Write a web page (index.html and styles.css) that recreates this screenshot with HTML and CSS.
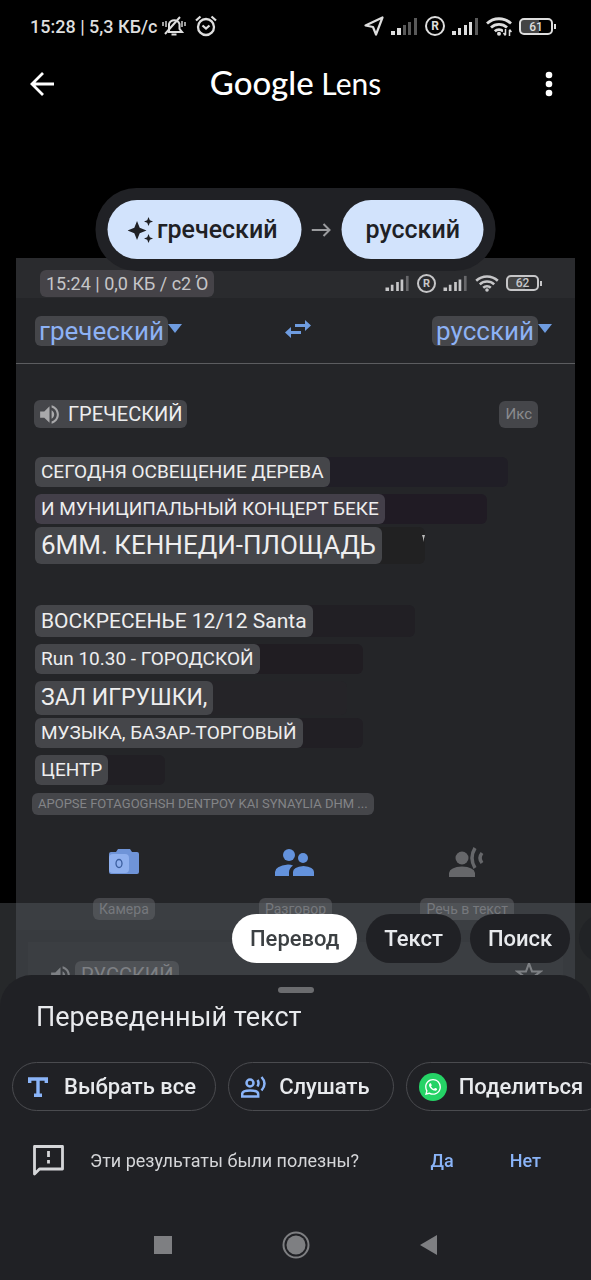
FILE: index.html
```html
<!DOCTYPE html>
<html lang="ru">
<head>
  <meta charset="UTF-8" />
  <meta name="viewport" content="width=device-width, initial-scale=1.0" />
  <title>Google Lens</title>
  <link rel="stylesheet" href="styles.css">
</head>
<body>
  <svg class="sprite" aria-hidden="true">
    <symbol id="wifi" viewBox="0 0 26 20">
      <g fill="none" stroke="currentColor" stroke-width="2.8">
        <path d="M1 7.5a17.5 17.5 0 0 1 24 0" />
        <path d="M5 11.5a11.8 11.8 0 0 1 16 0" />
        <path d="M8.8 15.3a6.3 6.3 0 0 1 8.4 0" />
      </g>
      <circle cx="13" cy="17.8" r="2" fill="currentColor" />
    </symbol>
    <symbol id="volume" viewBox="0 0 24 24">
      <path fill="currentColor" d="M3 9v6h4l5 5V4L7 9H3zm13.5 3c0-1.77-1.02-3.29-2.5-4.03v8.05c1.48-.73 2.5-2.25 2.5-4.02zM14 3.23v2.06c2.89.86 5 3.54 5 6.71s-2.11 5.85-5 6.71v2.06c4.01-.91 7-4.49 7-8.77s-2.99-7.86-7-8.77z" />
    </symbol>
  </svg>

  <header>
    <div class="status">
      <span class="status-text">15:28 | 5,3 КБ/с</span>
      <svg class="bell" viewBox="0 0 24 22" fill="none" stroke="currentColor" stroke-width="2">
        <path d="M7 16V9a5.5 5.5 0 0 1 10.500 0v5l2.500 3H6M3 19L18 2" />
        <path d="M4 6v6M1 7v4M20 6v6M23 7v4" stroke-width="1.400" />
        <path d="M9.500 19.500h5" stroke-width="2" />
      </svg>
      <svg class="alarm" viewBox="0 0 22 22" fill="none" stroke="currentColor" stroke-width="2.300">
        <circle cx="11" cy="12" r="8" />
        <path d="M7.500 10.500l3.500 3 3.500-3M1 5.500l4.500-4M21 5.500l-4.500-4" />
      </svg>
      <div class="status-icons">
        <svg width="20" height="20" viewBox="0 0 20 20" fill="none" stroke="currentColor" stroke-width="2.200" stroke-linejoin="round"><path d="M18.500 1.500L12 18.500 9 11 1.500 9.500z" /></svg>
        <svg width="27" height="18" viewBox="0 0 27 18" fill="currentColor">
          <path d="M0 14h4v4H0zM6 11h4v7H6z" />
          <path opacity=".4" d="M12 8h3v10h-3zM17 5h3v13h-3zM23 1h3v17h-3z" />
        </svg>
        <span class="reg">R</span>
        <svg width="27" height="18" viewBox="0 0 27 18" fill="currentColor">
          <path d="M0 14h4v4H0zM6 11h3v7H6zM12 8h3v10h-3zM17 5h3v13h-3z" />
          <path opacity=".4" d="M23 1h3v17h-3z" />
        </svg>
        <svg width="26" height="20" viewBox="0 0 26 20">
          <use href="#wifi" />
          <path d="M17 13h9v7h-9z" fill="#000" />
          <path d="M19.500 13v6M17.500 17l2 2.500M23.500 20v-6M25.500 16l-2-2.500" fill="none" stroke="currentColor" stroke-width="1.500" />
        </svg>
        <span class="battery">61</span>
      </div>
    </div>

    <div class="appbar">
      <button class="icon-btn" aria-label="Назад">
        <svg width="24" height="24" viewBox="0 0 24 24" fill="none" stroke="currentColor" stroke-width="2.800"><path d="M24 12H2M13 1L2 12l11 11" /></svg>
      </button>
      <h1><span>Google</span> Lens</h1>
      <button class="icon-btn" aria-label="Меню">
        <svg width="24" height="26" viewBox="0 0 24 26" fill="currentColor"><circle cx="12" cy="4" r="3.300" /><circle cx="12" cy="13" r="3.300" /><circle cx="12" cy="22" r="3.300" /></svg>
      </button>
    </div>
  </header>

  <div class="languages">
    <button class="lang">
      <svg width="26" height="26" viewBox="0 0 26 26" fill="currentColor"><path d="M9.500 4l2.700 6.800L19 13.500l-6.800 2.700L9.500 23l-2.700-6.800L0 13.500l6.800-2.700zM21 0l1.300 3.200 3.200 1.300-3.200 1.300L21 9l-1.300-3.200-3.200-1.300 3.200-1.300zM21 17l1.300 3.200 3.200 1.300-3.200 1.300L21 26l-1.300-3.200-3.200-1.300 3.200-1.300z" /></svg>
      греческий
    </button>
    <svg class="to" width="20" height="16" viewBox="0 0 20 16" fill="none" stroke="currentColor" stroke-width="2"><path d="M0 8h18M12 2l6 6-6 6" /></svg>
    <button class="lang">русский</button>
  </div>

  <main class="photo">
    <div class="photo-status">
      <span class="tag tag-time">15:24 | 0,0 КБ / с2 Ό</span>
      <div class="status-icons">
        <svg width="25" height="16" viewBox="0 0 27 18" fill="currentColor">
          <path d="M0 14h4v4H0zM6 11h3v7H6zM12 8h3v10h-3zM17 5h3v13h-3z" />
          <path opacity=".4" d="M23 1h3v17h-3z" />
        </svg>
        <span class="reg">R</span>
        <svg width="25" height="16" viewBox="0 0 27 18" fill="currentColor">
          <path d="M0 14h4v4H0zM6 11h3v7H6zM12 8h3v10h-3zM17 5h3v13h-3z" />
          <path opacity=".4" d="M23 1h3v17h-3z" />
        </svg>
        <svg width="24" height="18"><use href="#wifi" /></svg>
        <span class="battery">62</span>
      </div>
    </div>

    <div class="photo-langs">
      <div class="pick"><span class="tag">греческий</span></div>
      <svg class="swap" width="26" height="18" viewBox="0 0 26 18" fill="#6e9ce0"><path d="M10 4h10V0l6 5.500-6 5.500V7H10zM16 11H6V7l-6 5.500L6 18v-4h10z" /></svg>
      <div class="pick"><span class="tag">русский</span></div>
    </div>

    <div class="source-head">
      <span class="tag tag-source"><svg width="25" height="25"><use href="#volume" /></svg>ГРЕЧЕСКИЙ</span>
      <span class="tag tag-x">Икс</span>
    </div>

    <div class="lines">
      <p class="line l1"><span class="tag">СЕГОДНЯ ОСВЕЩЕНИЕ ДЕРЕВА</span></p>
      <p class="line l2"><span class="tag">И МУНИЦИПАЛЬНЫЙ КОНЦЕРТ БЕКЕ</span></p>
      <p class="line l3 big"><span class="tag">6ММ. КЕННЕДИ-ПЛОЩАДЬ</span><svg class="speck" width="4" height="8" viewBox="0 0 4 8"><path d="M1 0h3L2 7V3z" fill="#bbb" /></svg></p>
    </div>
    <div class="lines second">
      <p class="line l4"><span class="tag">ВОСКРЕСЕНЬЕ 12/12 Santa</span></p>
      <p class="line l5"><span class="tag">Run 10.30 - ГОРОДСКОЙ</span></p>
      <p class="line l6 mid"><span class="tag">ЗАЛ ИГРУШКИ,</span></p>
      <p class="line l7"><span class="tag">МУЗЫКА, БАЗАР-ТОРГОВЫЙ</span></p>
      <p class="line l8"><span class="tag">ЦЕНТР</span></p>
    </div>
    <p class="translit"><span class="tag">APOPSE FOTAGOGHSH DENTPOY KAI SYNAYLIA DHM ...</span></p>

    <div class="actions">
      <div class="action">
        <svg width="30" height="32" viewBox="0 0 30 32">
          <path fill="#6f94d8" d="M9 3h12l2 3h5q2 0 2 2v18q0 2-2 2H2q-2 0-2-2V8q0-2 2-2h5z" />
          <rect x="0" y="8" width="20" height="19" rx="4" fill="#8fb0ee" />
          <ellipse cx="10" cy="17.500" rx="3" ry="4" fill="none" stroke="#3c5f9f" stroke-width="1.300" />
        </svg>
        <span class="tag">Камера</span>
      </div>
      <div class="action">
        <svg width="40" height="32" viewBox="0 0 40 32" fill="#6392dc">
          <circle cx="14" cy="9" r="6" /><circle cx="28" cy="12" r="5" />
          <path d="M0 30v-4q0-6 13-7.500 3 0 5 1-4 3-4 7v3.500zM18 30v-4q0-5 10.500-6Q39 21 39 26v4z" />
        </svg>
        <span class="tag">Разговор</span>
      </div>
      <div class="action">
        <svg width="36" height="32" viewBox="0 0 36 32" fill="#66676a">
          <circle cx="13" cy="12" r="6.500" />
          <path d="M0 31v-4q1-6 13-6.500Q25 21 26 27v4z" />
          <path d="M26 2q-6 10 0 20M33 7q-4 5 0 10" fill="none" stroke="#66676a" stroke-width="3.500" />
        </svg>
        <span class="tag">Речь в текст</span>
      </div>
    </div>

    <div class="result">
      <div class="result-card">
        <svg width="25" height="25"><use href="#volume" /></svg>
        <span class="tag">РУССКИЙ</span>
        <svg class="star" width="28" height="28" viewBox="0 0 24 24" fill="none" stroke="currentColor" stroke-width="1.800"><path d="M12 2l2.600 7H22l-6 4.500 2.300 7.500-6.300-4.500L5.700 21 8 13.500 2 9h7.400z" /></svg>
      </div>
    </div>
  </main>

  <div class="dock">
    <nav class="modes">
      <button class="mode active">Перевод</button>
      <button class="mode">Текст</button>
      <button class="mode">Поиск</button>
      <button class="mode next" aria-label="Ещё"></button>
    </nav>

    <section class="sheet">
      <div class="handle"></div>
      <h2>Переведенный текст</h2>
      <div class="chips">
        <button class="chip chip-select">
          <svg width="20" height="20" viewBox="0 0 20 20" fill="none" stroke="#8ab4f8" stroke-width="3.400"><path d="M1.700 6V2h16.600v4M10 2v16M6 18.300h8" /></svg>
          Выбрать все
        </button>
        <button class="chip">
          <svg width="26" height="22" viewBox="0 0 26 22" fill="none" stroke="#8ab4f8" stroke-width="2.500">
            <circle cx="9" cy="7" r="3.500" />
            <path d="M1.200 20.500v-2.500q0-3.500 8-3.500t8 3.500v2.500z" />
            <path d="M16.500 4q2 3 0 6.500M20.500 1q6 6.500 0 13.500" />
          </svg>
          Слушать
        </button>
        <button class="chip chip-share">
          <svg width="28" height="28" viewBox="-9 -9 42 42">
            <circle cx="12" cy="12" r="21" fill="#25d366" />
            <path fill="#fff" d="M17.472 14.382c-.297-.149-1.758-.867-2.03-.967-.273-.099-.471-.148-.67.15-.197.297-.767.966-.94 1.164-.173.199-.347.223-.644.075-.297-.15-1.255-.463-2.39-1.475-.883-.788-1.48-1.761-1.653-2.059-.173-.297-.018-.458.13-.606.134-.133.298-.347.446-.52.149-.174.198-.298.298-.497.099-.198.05-.371-.025-.52-.075-.149-.669-1.612-.916-2.207-.242-.579-.487-.5-.669-.51-.173-.008-.371-.01-.57-.01-.198 0-.52.074-.792.372-.272.297-1.04 1.016-1.04 2.479 0 1.462 1.065 2.875 1.213 3.074.149.198 2.096 3.2 5.077 4.487.709.306 1.262.489 1.694.625.712.227 1.36.195 1.871.118.571-.085 1.758-.719 2.006-1.413.248-.694.248-1.289.173-1.413-.074-.124-.272-.198-.57-.347m-5.421 7.403h-.004a9.87 9.87 0 01-5.031-1.378l-.361-.214-3.741.982.998-3.648-.235-.374a9.86 9.86 0 01-1.51-5.26c.001-5.45 4.436-9.884 9.888-9.884 2.64 0 5.122 1.03 6.988 2.898a9.825 9.825 0 012.893 6.994c-.003 5.45-4.437 9.884-9.885 9.884m8.413-18.297A11.815 11.815 0 0012.05 0C5.495 0 .16 5.335.157 11.892c0 2.096.547 4.142 1.588 5.945L.057 24l6.305-1.654a11.882 11.882 0 005.683 1.448h.005c6.554 0 11.89-5.335 11.893-11.893a11.821 11.821 0 00-3.48-8.413z" />
          </svg>
          Поделиться
        </button>
      </div>
      <div class="feedback">
        <svg width="31" height="31" viewBox="0 0 31 31" fill="none" stroke="currentColor" stroke-width="2.800" stroke-linejoin="round"><path d="M1.500 1.500h28v22.500h-23l-5 5zM15.500 6v6M15.500 15v3.500" /></svg>
        <span class="question">Эти результаты были полезны?</span>
        <button class="answer">Да</button>
        <button class="answer">Нет</button>
      </div>
      <div class="navbar">
        <svg width="28" height="28" viewBox="0 0 28 28"><path d="M5 5h18v18H5z" fill="currentColor" /></svg>
        <svg width="28" height="28" viewBox="0 0 28 28"><circle cx="14" cy="14" r="9.500" fill="currentColor" /><circle cx="14" cy="14" r="12.500" fill="none" stroke="currentColor" stroke-width="2" /></svg>
        <svg width="28" height="28" viewBox="0 0 28 28"><path d="M5 14L22 4v20z" fill="currentColor" /></svg>
      </div>
    </section>
  </div>
</body>
</html>
```
FILE: styles.css
```css
* {
  box-sizing: border-box;
}
body {
  margin: 0;
  background: #000;
  color: #e8eaed;
  font-family: Roboto, sans-serif;
  position: relative;
}
h1, h2, p {
  margin: 0;
}
button {
  border: none;
  padding: 0;
  font-family: inherit;
  cursor: pointer;
}
svg {
  display: block;
  flex: none;
}
.sprite {
  position: absolute;
  width: 0;
  height: 0;
}

/* header */
header {
  height: 258px;
}
.status {
  display: flex;
  align-items: center;
  height: 52px;
  padding: 0 35px 0 30px;
  color: #dedede;
}
.status-text {
  font-size: 18px;
  font-weight: 500;
}
.bell {
  width: 24px;
  height: 22px;
  margin: 0 9px 0 5px;
}
.alarm {
  width: 22px;
  height: 22px;
}
.status-icons {
  display: flex;
  align-items: center;
  gap: 7px;
  margin-left: auto;
}
.reg {
  width: 20px;
  height: 20px;
  border: 2px solid currentColor;
  border-radius: 50%;
  font-size: 12px;
  font-weight: bold;
  line-height: 16px;
  text-align: center;
}
.battery {
  position: relative;
  width: 34px;
  height: 17px;
  margin-right: 3px;
  border: 2px solid currentColor;
  border-radius: 5px;
  background: linear-gradient(to right, #444 60%, transparent 60%);
  font-size: 12px;
  font-weight: 500;
  line-height: 14px;
  text-align: center;
}
.battery::after {
  content: "";
  position: absolute;
  right: -5px;
  top: 4px;
  width: 2px;
  height: 5px;
  background: currentColor;
}
.appbar {
  display: flex;
  align-items: center;
  justify-content: space-between;
  height: 64px;
  padding: 0 30px;
  color: #fff;
}
.appbar h1 {
  font-family: Lato, sans-serif;
  font-size: 30px;
  font-weight: 400;
  line-height: 40px;
  padding-bottom: 4px;
}
.appbar h1 span {
  font-size: 33px;
  font-weight: 500;
}
.icon-btn {
  background: none;
  color: #fff;
}

/* language switch over the photo */
.languages {
  position: absolute;
  top: 188px;
  left: 50%;
  transform: translateX(-50%);
  display: flex;
  align-items: center;
  gap: 10px;
  padding: 12px;
  border-radius: 41px;
  background: #202125;
  color: #9a9b9e;
}
.lang {
  display: flex;
  align-items: center;
  gap: 4px;
  height: 59px;
  padding: 0 24px;
  border-radius: 30px;
  background: #d2e3fc;
  color: #202125;
  font-size: 25px;
  font-weight: 500;
}
.lang:first-child {
  padding-left: 20px;
}

/* translated photo */
.photo {
  margin: 0 16px;
  background: #242528;
  color: #eeeeef;
}
.tag {
  display: inline-block;
  padding: 0 6px;
  border-radius: 6px;
  background: #45464a;
  white-space: nowrap;
}
.photo-status {
  display: flex;
  align-items: center;
  height: 40px;
  padding: 10px 33px 0 24px;
  background: #2a2b2e;
  color: #c6c6c8;
}
.photo-status .reg {
  width: 19px;
  height: 19px;
  font-size: 11px;
  line-height: 15px;
}
.photo-status .battery {
  width: 33px;
  height: 16px;
  line-height: 12px;
}
.tag-time {
  background: #454348;
  font-size: 18px;
  line-height: 27px;
}
.photo-langs {
  display: flex;
  align-items: center;
  justify-content: space-between;
  height: 66px;
  padding: 0 23px 0 19px;
  border-bottom: 1px solid #5c5d60;
}
.swap {
  margin: 0 18px 4px 0;
}
.pick {
  display: flex;
  align-items: center;
}
.pick .tag {
  padding: 0 4px;
  color: #8db2f5;
  font-size: 26px;
  line-height: 30px;
}
.pick::after {
  content: "";
  margin-bottom: 4px;
  border: 7px solid transparent;
  border-top: 9px solid #6e9ce0;
  border-bottom: 0;
}
.source-head {
  display: flex;
  align-items: center;
  justify-content: space-between;
  padding: 36px 37px 29px 18px;
}
.tag-source {
  display: flex;
  align-items: center;
  gap: 6px;
  padding: 0 4px 0 3px;
  font-size: 20px;
  line-height: 28px;
}
.tag-source svg {
  color: #a9a9ab;
}
.tag-x {
  color: #8a8b8e;
  font-size: 15px;
  line-height: 27px;
}
.lines {
  display: flex;
  flex-direction: column;
  gap: 7px;
  padding: 0 20px 0 19px;
}
.lines.second {
  margin-top: 41px;
}
/* a line keeps the width of the text it replaced */
.line {
  display: flex;
  border-radius: 6px;
  background: #211f24;
  font-size: 19px;
  line-height: 30px;
}
.line.mid {
  font-size: 23px;
  line-height: 34px;
}
.line.big {
  font-size: 26px;
  line-height: 37px;
}
.l1 { width: 91%; background: #201e26; }
.l2 { width: 87%; background: #201b24; }
.l2 .tag { background: #433f49; }
.l3 { width: 75%; margin-top: -4px; background: #212122; }
.l4 { width: 73%; }
.l5 { width: 63%; background: #201d22; }
.l6 { width: 60%; background: #252428; }
.l7 { width: 63%; margin-top: -4px; }
.l8 { width: 25%; }
.line.l4 {
  font-size: 21px;
  line-height: 32px;
}
.speck {
  margin: 8px 0 0 auto;
}
.translit {
  padding: 8px 16px 0;
  color: #838487;
  font-size: 13px;
  line-height: 22px;
}
.actions {
  display: grid;
  grid-template-columns: repeat(3, 1fr);
  padding: 31px 22px 10px;
}
.action {
  display: flex;
  flex-direction: column;
  align-items: center;
  gap: 20px;
  color: #85868a;
  font-size: 14px;
  line-height: 22px;
}
.result {
  padding: 12px 12px 0;
  background: #1f2023;
}
.result-card {
  display: flex;
  align-items: center;
  gap: 2px;
  height: 66px;
  padding: 0 20px 0 20px;
  background: #242528;
  color: #929396;
}
.result-card .tag {
  font-size: 20px;
  line-height: 28px;
}
.star {
  margin-left: auto;
}

/* bottom controls */
.dock {
  position: fixed;
  left: 0;
  right: 0;
  bottom: 0;
  background: rgba(95, 99, 104, 0.4);
}
.modes {
  display: flex;
  gap: 9px;
  height: 72px;
  padding: 11px 0 12px 232px;
  overflow: hidden;
}
.mode {
  flex: none;
  padding: 0 18px;
  border-radius: 25px;
  background: #202125;
  color: #e8eaed;
  font-size: 22px;
  font-weight: 500;
}
.mode.active {
  background: #fff;
  color: #3c4043;
}
.mode.next {
  width: 90px;
  opacity: 0.7;
}
.sheet {
  border-radius: 32px 32px 0 0;
  background: #202125;
  overflow: hidden;
}
.handle {
  width: 36px;
  height: 6px;
  margin: 12px auto 8px;
  border-radius: 3px;
  background: #6b6c6f;
}
.sheet h2 {
  padding: 0 36px;
  font-size: 27px;
  font-weight: 400;
  line-height: 32px;
}
.chips {
  display: flex;
  gap: 12px;
  padding: 29px 0 0 12px;
}
.chip {
  display: flex;
  flex: none;
  align-items: center;
  gap: 12px;
  height: 49px;
  padding: 0 23px 0 12px;
  border: 1px solid #4a4b4f;
  border-radius: 25px;
  background: none;
  color: #e8eaed;
  font-size: 22px;
  font-weight: 500;
}
.chip-select {
  gap: 16px;
  padding: 0 19px 0 15px;
}
.feedback {
  display: flex;
  align-items: center;
  height: 98px;
  padding: 0 50px 0 33px;
  color: #d5d6d9;
}
.question {
  margin: 0 auto 0 26px;
  font-size: 18px;
}
.answer {
  margin-left: 56px;
  background: none;
  color: #8ab4f8;
  font-size: 18px;
  font-weight: 500;
}
.navbar {
  display: flex;
  align-items: center;
  justify-content: center;
  gap: 105px;
  height: 71px;
  color: #7e7f82;
}
```
